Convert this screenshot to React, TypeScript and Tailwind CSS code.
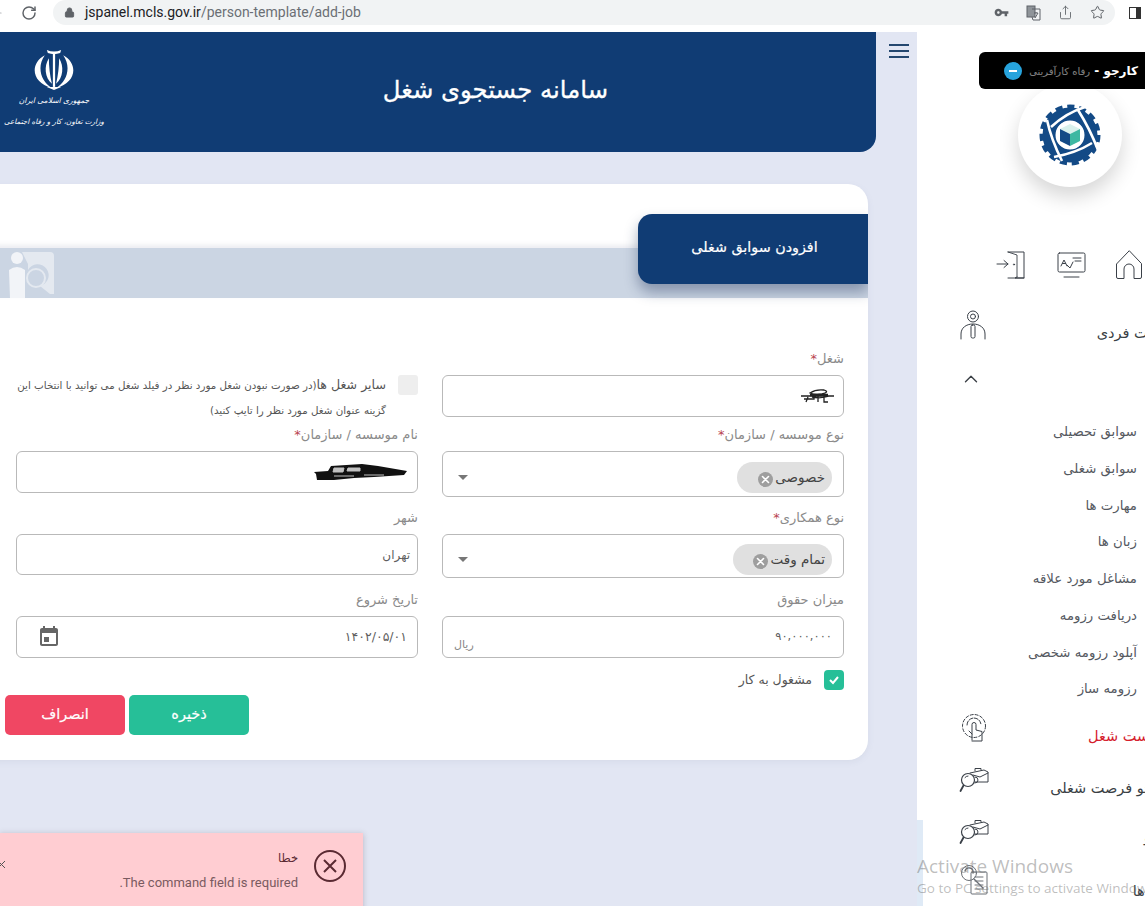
import React from "react";
import { RotateCw, Lock, Star, Share, ChevronUp, ArrowLeft } from "lucide-react";

const Emblem = () => (
  <svg width="42" height="41" viewBox="0 0 40 40" fill="#fff">
    <path d="M13 1q7 3 14 0l-1 3q-6 2-12 0z" />
    <rect x="18.900" y="4" width="2.200" height="33" />
    <path d="M11 6C-4 14-2 33 18 38C7 32 3 17 11 6Z" />
    <path d="M15 9C10 17 11 28 18 34C16 26 15 17 15 9Z" />
    <path d="M29 6C44 14 42 33 22 38C33 32 37 17 29 6Z" />
    <path d="M25 9C30 17 29 28 22 34C24 26 25 17 25 9Z" />
    <path d="M13 37h14l-7 3z" />
  </svg>
);

const GearLogo = () => (
  <svg width="64" height="64" viewBox="0 0 64 64">
    <circle cx="32" cy="32" r="21" fill="none" stroke="#134a86" strokeWidth="13" />
    <circle cx="32" cy="32" r="28" fill="none" stroke="#134a86" strokeWidth="5" strokeDasharray="7 4.730" />
    <g stroke="#fff" strokeWidth="2.600" fill="none">
      <path d="M47 4Q28 10 13 24" />
      <path d="M9 17Q13 36 24 58" />
      <path d="M16 54Q38 50 54 40" />
      <path d="M60 47Q52 26 40 7" />
    </g>
    <circle cx="32" cy="32" r="14" fill="#fff" />
    <path d="M32 21l10 5-10 5-10-5z" fill="#d9f1ec" />
    <path d="M22 26l10 5v12l-10-5z" fill="#134a86" />
    <path d="M42 26l-10 5v12l10-5z" fill="#3db8a2" />
  </svg>
);

const line = { fill: "none", stroke: "#3a4048", strokeWidth: 1, strokeLinecap: "round" as const, strokeLinejoin: "round" as const };

const ExitIcon = () => (
  <svg width="32" height="30" viewBox="0 0 32 30" {...line}>
    <path d="M13 2H29V28H13" />
    <path d="M13 2L22 5V27" opacity=".9" />
    <path d="M29 28H20L22 27" />
    <path d="M2 14H13M9 10.500L13 14L9 17.500" />
    <circle cx="19" cy="14.500" r=".6" />
  </svg>
);
const BoardIcon = () => (
  <svg width="30" height="28" viewBox="0 0 30 28" {...line}>
    <rect x="2" y="2" width="27" height="19" rx="1.500" />
    <path d="M5 15l3-6 3 6M6.500 12.500h3M11 14l3 3 3-6M17 7h8M19 10h6" />
    <path d="M8 26H23" />
  </svg>
);
const HomeIcon = () => (
  <svg width="28" height="30" viewBox="0 0 28 30" {...line}>
    <path d="M14 1L1.500 14V27a1.500 1.500 0 0 0 1.500 1.500H9V19a5 5 0 0 1 10 0V28.500H25a1.500 1.500 0 0 0 1.500-1.500V14Z" />
  </svg>
);
const PersonIcon = () => (
  <svg width="28" height="32" viewBox="0 0 28 32" {...line}>
    <circle cx="14" cy="6.500" r="5.500" />
    <circle cx="14" cy="6.500" r="2.500" />
    <path d="M2 29V24C2 18 7 14 14 14C21 14 26 18 26 24V29" />
    <rect x="12" y="15" width="4" height="13" rx="1.500" />
  </svg>
);
const GearHand = () => (
  <svg width="28" height="30" viewBox="0 0 28 30" {...line}>
    <circle cx="14" cy="13" r="11.500" strokeDasharray="3 2" />
    <path d="M7 12A7 7 0 0 1 21 12" strokeDasharray="4 1.500" />
    <path d="M12 27V11.500a2 2 0 0 1 4 0V17l6 1.500V28H12" />
    <path d="M12 21l-3-3" />
  </svg>
);
const BriefcaseLens = () => (
  <svg width="30" height="28" viewBox="0 0 30 28" {...line}>
    <path d="M11 7L25 4L29 6V16H16" />
    <path d="M16 4.800V2.500H22V3.800M14 9L21 11L29 7" />
    <circle cx="9" cy="14" r="6.500" strokeWidth="1.200" />
    <path d="M6 11.500A4 4 0 0 1 9 10M16 11a3 3 0 0 1 0 6" />
    <path d="M4.500 19.500L1.500 25" strokeWidth="1.800" />
  </svg>
);
const DocLens = () => (
  <svg width="30" height="32" viewBox="0 0 30 32" {...line} opacity=".75">
    <circle cx="10" cy="9" r="7.500" />
    <path d="M6 7a3 3 0 0 1 8 2M15 15l9 9" strokeWidth="1.400" />
    <rect x="12" y="8" width="16" height="22" rx="1" />
    <path d="M16 13h8M16 17h8M16 21h8M16 25h8" />
  </svg>
);

const BoatScribble = () => (
  <svg width="94" height="18" viewBox="0 0 94 18">
    <path d="M0 9L14 8L17 3L48 1L64 3L93 8L90 12L60 14L40 15L20 17H3L2 11Z" fill="#111" />
    <path d="M20 5H30L29 9H19ZM34 5H46V8H33ZM20 13H40M50 12H70" stroke="#eee" strokeWidth="1" fill="#eee" opacity=".8" />
  </svg>
);
const JobScribble = () => (
  <svg width="36" height="16" viewBox="0 0 36 16" fill="none" stroke="#222" strokeWidth="1.300">
    <path d="M1 8H34M10 5Q16 1 24 2Q30 4 22 6Q14 7 10 5ZM4 11H14V6M18 8V14M24 8V14H28M8 9L6 14M12 9Q20 11 30 8" />
    <path d="M10 7H28" strokeWidth="2.500" />
  </svg>
);

const ChipX = () => (
  <span className="flex h-[15px] w-[15px] items-center justify-center rounded-full bg-[#9e9e9e]">
    <svg width="9" height="9" viewBox="0 0 9 9" stroke="#fff" strokeWidth="1.600" strokeLinecap="round"><path d="M1.500 1.500l6 6M7.500 1.500l-6 6" /></svg>
  </span>
);

const Caret = () => <span className="mt-[6px] h-0 w-0 border-x-[5px] border-t-[5px] border-x-transparent border-t-[#777]" />;

const Label = ({ text, star }: { text: string; star?: boolean }) => (
  <div className="flex h-4 items-center text-[13px] leading-4 text-[#8a8a8a]">
    {text}{star && <span className="text-[#b8434f]">*</span>}
  </div>
);

const Box = ({ h, children }: { h: string; children?: React.ReactNode }) => (
  <div className={"mt-2 flex items-center justify-between rounded-md border border-[#b9b9b9] bg-white text-[#5f5f5f] " + h}>
    {children}
  </div>
);

const Sub = ({ t }: { t: string }) => (
  <div className="flex h-[36.700px] items-center text-[13.300px] text-[#55595f]">{t}</div>
);

const Row = ({ icon, text, cut, red, className = "" }: { icon: React.ReactNode; text: string; cut: string; red?: boolean; className?: string }) => (
  <div className={"ml-[42px] flex h-10 items-center justify-between " + className}>
    <span className={"whitespace-nowrap text-[14.500px] " + cut + (red ? " text-[#d5202c]" : " text-[#3a3f45]")}>{text}</span>
    <span className="flex w-[30px] justify-center">{icon}</span>
  </div>
);

const Chip = ({ t, w }: { t: string; w: string }) => (
  <span className={"mt-[6px] flex h-[31px] items-center gap-[2px] rounded-full bg-[#e0e0e0] pr-[7px] text-[13.500px] text-[#444] " + w}>
    <span className="whitespace-nowrap">{t}</span>
    <span className="pt-[5px]"><ChipX /></span>
  </span>
);

export default function App() {
  return (
    <div dir="rtl" className="relative flex h-[906px] w-[1145px] flex-col overflow-hidden bg-[#e2e6f3] font-['DejaVu_Sans',sans-serif]">
      {/* browser bar */}
      <div dir="ltr" className="flex h-8 shrink-0 items-start bg-white">
        <div className="flex h-[26px] w-[53px] items-center justify-between pr-[16px]">
          <ArrowLeft size={14} className="-ml-[10px] text-[#b5b8bc]" />
          <RotateCw size={16} strokeWidth={2.200} className="text-[#5f6368]" />
        </div>
        <div className="flex h-[25px] w-[1062px] items-center rounded-full bg-[#f1f3f4] pl-[11px]">
          <Lock size={11} fill="#5f6368" className="text-[#5f6368]" />
          <span className="ml-[10px] font-['Roboto',sans-serif] text-[14px] text-[#202124]">
            jspanel.mcls.gov.ir<span className="text-[#6b6f74]">/person-template/add-job</span>
          </span>
          <div className="ml-auto flex items-center gap-[17px] pr-[10px] text-[#5f6368]">
            <svg width="15" height="15" viewBox="0 0 24 24" fill="#5f6368"><path d="M12.650 10C11.830 7.670 9.610 6 7 6c-3.310 0-6 2.690-6 6s2.690 6 6 6c2.610 0 4.830-1.670 5.650-4H17v4h4v-4h2v-4H12.650zM7 14c-1.100 0-2-.900-2-2s.900-2 2-2 2 .900 2 2-.900 2-2 2z" /></svg>
            <svg width="15" height="16" viewBox="0 0 15 16" fill="none" stroke="#5f6368"><rect x="1" y="1" width="8" height="11" fill="#8f9499" /><path d="M6 4h8v11H7l-1-3" /><path d="M8 8h4M10 7v1M9 13l3-5" /></svg>
            <Share size={15} strokeWidth={1.400} />
            <Star size={15} strokeWidth={1.600} />
          </div>
        </div>
        <div className="ml-[14px] mt-[7px] h-3 w-3 border-[1.500px] border-r-[5px] border-[#333]" />
      </div>

      <div className="flex min-h-0 flex-1">
        {/* sidebar (first in rtl) */}
        <aside className="relative w-[228px] shrink-0 overflow-hidden bg-white">
          <div className="relative z-10 ml-[62px] mt-5 flex h-[37px] items-center rounded-l-md bg-black pr-[7px] text-[12px] font-bold text-white">
            <span className="whitespace-nowrap">کارجو - <span className="text-[10px] font-normal opacity-50">رفاه کارآفرینی</span></span>
            <span className="mr-[7px] flex h-[18px] w-[18px] items-center justify-center rounded-full bg-[#27a3dc]">
              <span className="h-[2px] w-2 bg-white" />
            </span>
          </div>
          <div className="mr-[23px] -mt-[6px] flex h-[104px] w-[104px] items-center justify-center rounded-full bg-white shadow-[0_10px_20px_rgba(0,0,0,0.16)]">
            <GearLogo />
          </div>
          <div className="mr-[2px] mt-[63px] flex h-[30px] w-[148px] items-center justify-between">
            <HomeIcon />
            <BoardIcon />
            <ExitIcon />
          </div>
          <div className="ml-[42px] mt-[30px] flex h-8 items-center justify-between">
            <span className="-mr-[40px] whitespace-nowrap pt-[16px] text-[14.500px] text-[#3a3f45]">اطلاعات فردی</span>
            <span className="flex w-[28px] justify-center"><PersonIcon /></span>
          </div>
          <div className="ml-[42px] mt-[26px] flex h-[22px] items-center justify-end pl-[1px]">
            <ChevronUp size={22} strokeWidth={1.500} className="text-[#3a3f45]" />
          </div>
          <div className="mr-2 mt-[24px] flex flex-col">
            <Sub t="سوابق تحصیلی" />
            <Sub t="سوابق شغلی" />
            <Sub t="مهارت ها" />
            <Sub t="زبان ها" />
            <Sub t="مشاغل مورد علاقه" />
            <Sub t="دریافت رزومه" />
            <Sub t="آپلود رزومه شخصی" />
            <Sub t="رزومه ساز" />
          </div>
          <Row icon={<GearHand />} text="درخواست شغل" cut="-mr-[38px] pt-[18px]" red />
          <Row icon={<BriefcaseLens />} text="جستجو فرصت شغلی" cut="-mr-[35px] pt-[18px]" className="mt-3" />
          <Row icon={<BriefcaseLens />} text="جستجو" cut="-mr-[42px] pt-[12px]" className="mt-3" />
          <Row icon={<DocLens />} text="گزارش ها" cut="-mr-[48px] pt-[24px]" className="mt-2" />
          <div className="absolute bottom-0 right-[222px] h-[86px] w-[6px] bg-[#dfeaf6]" />
        </aside>

        {/* main */}
        <main className="min-w-0 flex-1 overflow-hidden">
          <div className="flex h-[120px]">
            <div className="flex w-[41px] shrink-0 flex-col items-center gap-[4px] pl-[5px] pt-[12px]">
              <span className="h-[2px] w-5 bg-[#24476f]" />
              <span className="h-[2px] w-5 bg-[#24476f]" />
              <span className="h-[2px] w-5 bg-[#24476f]" />
            </div>
            <header className="flex w-[896px] shrink-0 items-center rounded-br-2xl bg-[#103c74]">
              <div className="w-[268px] shrink-0" />
              <h1 className="whitespace-nowrap pb-[3px] text-[24.300px] font-normal text-white [-webkit-text-stroke:0.3px_white]">سامانه جستجوی شغل</h1>
              <div className="ml-[22px] mr-auto flex w-[104px] flex-col items-center pb-[3px] text-white">
                <Emblem />
                <span className="mt-[1px] whitespace-nowrap text-[7.600px] italic leading-[20px]">جمهوری اسلامی ایران</span>
                <span className="whitespace-nowrap text-[7.200px] italic leading-[21px]">وزارت تعاون، کار و رفاه اجتماعی</span>
              </div>
            </header>
          </div>

          <section className="relative mr-[49px] mt-8 h-[576px] w-[888px] overflow-hidden rounded-[20px] bg-white shadow-[0_2px_6px_rgba(120,130,160,0.1)]">
            <div className="mt-16 flex h-[50px] items-end justify-end bg-[#cbd5e3] pl-7 shadow-[0_-3px_5px_rgba(120,130,160,0.15)]">
              <svg width="47" height="48" viewBox="0 0 47 48" fill="#e4e9f0">
                <circle cx="9" cy="8" r="6" fill="#f2f4f8" />
                <path d="M1 20Q9 14 17 20V48H2z" fill="#f2f4f8" />
                <path d="M14 2H42Q46 2 46 6V44H42L32 36A11 11 0 1 0 20 20V14Z" />
                <circle cx="28" cy="28" r="9" fill="none" stroke="#e4e9f0" strokeWidth="2" />
              </svg>
            </div>
            <div className="absolute right-0 top-[30px] flex h-[70px] w-[230px] items-center justify-center rounded-l-[14px] bg-[#103c74] pb-[2px] pl-[3px] text-[14.300px] text-white shadow-[0_8px_14px_rgba(30,50,90,0.4)] [-webkit-text-stroke:0.2px_white]">
              افزودن سوابق شغلی
            </div>

            <form className="mr-6 pt-[53px]">
              <div className="grid grid-cols-[402px_402px] items-start gap-x-6">
                <div>
                  <Label text="شغل" star />
                  <Box h="h-[42px] pr-[7px]"><JobScribble /></Box>
                </div>
                <div className="flex h-[66px] items-start gap-3 pt-[24px]">
                  <span className="h-5 w-5 shrink-0 rounded-[3px] bg-[#eeeeee]" />
                  <p className="-mt-[3px] whitespace-nowrap text-[10.300px] leading-[25px] text-[#555]">
                    <span className="text-[12.600px]">سایر شغل ها</span>(در صورت نبودن شغل مورد نظر در فیلد شغل می توانید با انتخاب این
                    <br />گزینه عنوان شغل مورد نظر را تایپ کنید)
                  </p>
                </div>
              </div>
              <div className="mt-[10px] grid grid-cols-[402px_402px] items-start gap-x-6">
                <div>
                  <Label text="نوع موسسه / سازمان" star />
                  <Box h="h-[46px] pl-[15px] pr-[11px]"><Chip t="خصوصی" w="w-[95px]" /><Caret /></Box>
                </div>
                <div>
                  <Label text="نام موسسه / سازمان" star />
                  <Box h="h-[42px] pr-[9px]"><BoatScribble /></Box>
                </div>
              </div>
              <div className="mt-[13px] grid grid-cols-[402px_402px] items-start gap-x-6">
                <div>
                  <Label text="نوع همکاری" star />
                  <Box h="h-[44px] pl-[15px] pr-[11px]"><Chip t="تمام وقت" w="w-[99px]" /><Caret /></Box>
                </div>
                <div>
                  <Label text="شهر" />
                  <Box h="h-[41px] pr-[7px] text-[12px]">تهران</Box>
                </div>
              </div>
              <div className="mt-[14px] grid grid-cols-[402px_402px] items-start gap-x-6">
                <div>
                  <Label text="میزان حقوق" />
                  <Box h="h-[42px] pl-[11px] pr-[11px] text-[11.500px]">
                    <span>۹۰,۰۰۰,۰۰۰</span>
                    <span className="pt-[16px] text-[11px] text-[#888]">ریال</span>
                  </Box>
                </div>
                <div>
                  <Label text="تاریخ شروع" />
                  <Box h="h-[42px] pl-[20px] pr-[10px] text-[12.500px]">
                    <span>۱۴۰۲/۰۵/۰۱</span>
                    <svg width="24" height="24" viewBox="0 0 24 24" fill="#666" className="-scale-x-100"><path d="M17 12h-5v5h5v-5zM16 1v2H8V1H6v2H5c-1.110 0-1.990.900-1.990 2L3 19c0 1.100.890 2 2 2h14c1.100 0 2-.900 2-2V5c0-1.100-.900-2-2-2h-1V1h-2zm3 18H5V8h14v11z" /></svg>
                  </Box>
                </div>
              </div>
              <div className="mt-3 flex h-5 items-center gap-3">
                <span className="flex h-5 w-5 items-center justify-center rounded-[4px] bg-[#26bf98]">
                  <svg width="12" height="10" viewBox="0 0 12 10" fill="none" stroke="#fff" strokeWidth="2"><path d="M2 5l3 3 5-6" /></svg>
                </span>
                <span className="text-[12.500px] text-[#555]">مشغول به کار</span>
              </div>
              <div className="mt-[5px] flex w-[844px] gap-1">
                <button type="button" className="mr-[595px] h-10 w-[120px] rounded-[5px] bg-[#26bf98] text-[14.500px] text-white [-webkit-text-stroke:0.2px_white]">ذخیره</button>
                <button type="button" className="h-10 w-[120px] rounded-[5px] bg-[#f04763] text-[14.500px] text-white [-webkit-text-stroke:0.2px_white]">انصراف</button>
              </div>
            </form>
          </section>
        </main>
      </div>

      {/* toast */}
      <div className="absolute bottom-[-12px] left-0 flex h-[85px] w-[363px] items-start bg-[#ffcdd2] pr-[17px] pt-[17px] shadow-[0_1px_6px_rgba(60,40,60,0.25)]">
        <svg width="32" height="32" viewBox="0 0 32 32" fill="none" stroke="#5a2a32" strokeWidth="2"><circle cx="16" cy="16" r="15" /><path d="M10 10l12 12M22 10L10 22" /></svg>
        <div className="mr-4">
          <div className="text-[11.500px] leading-4 text-[#5a2a32]">خطا</div>
          <div className="mt-[9px] font-['Roboto',sans-serif] text-[13px] leading-4 text-[#7a5a60]">The command field is required.</div>
        </div>
        <svg width="8" height="8" viewBox="0 0 8 8" stroke="#555" strokeWidth="1" className="ml-[-2px] mr-auto mt-[11px]"><path d="M0 0l7 7M7 0L0 7" /></svg>
      </div>

      {/* windows watermark */}
      <div dir="ltr" className="pointer-events-none absolute left-[917px] top-[854px] whitespace-nowrap font-['Open_Sans',sans-serif] text-[rgba(110,110,110,0.45)]">
        <div className="text-[19px] leading-6">Activate Windows</div>
        <div className="text-[13.500px] leading-5">Go to PC settings to activate Windows.</div>
      </div>
    </div>
  );
}
